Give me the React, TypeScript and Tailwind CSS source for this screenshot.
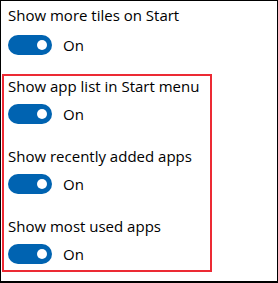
function Toggle() {
  return (
    <div className="flex items-center h-5">
      <div className="w-11 h-5 rounded-full bg-[#0063b1] flex items-center justify-end pr-[5px]">
        <div className="w-[10px] h-[10px] rounded-full bg-white" />
      </div>
      <span className="ml-[11px] text-[15px] text-black">On</span>
    </div>
  );
}

function Setting({ label, first }: { label: string; first?: boolean }) {
  return (
    <div>
      <div className="h-5 leading-5 text-[15px] text-black whitespace-nowrap">{label}</div>
      <div className={first ? "mt-[10px]" : "mt-2"}>
        <Toggle />
      </div>
    </div>
  );
}

export default function App() {
  return (
    <div
      className="w-[278px] h-[283px] bg-white border border-black border-b-2 overflow-hidden"
      style={{ fontFamily: '"Open Sans", "Noto Sans", sans-serif' }}
    >
      <div className="pl-[7px] pt-[4px]">
        <Setting label="Show more tiles on Start" first />
      </div>

      {/* highlighted group */}
      <div className="ml-[1px] mt-[19px] w-[210px] border-2 border-[#ec2a34] pl-[4px] pb-[6px] flex flex-col gap-[22px]">
        <Setting label="Show app list in Start menu" />
        <Setting label="Show recently added apps" />
        <Setting label="Show most used apps" />
      </div>
    </div>
  );
}
